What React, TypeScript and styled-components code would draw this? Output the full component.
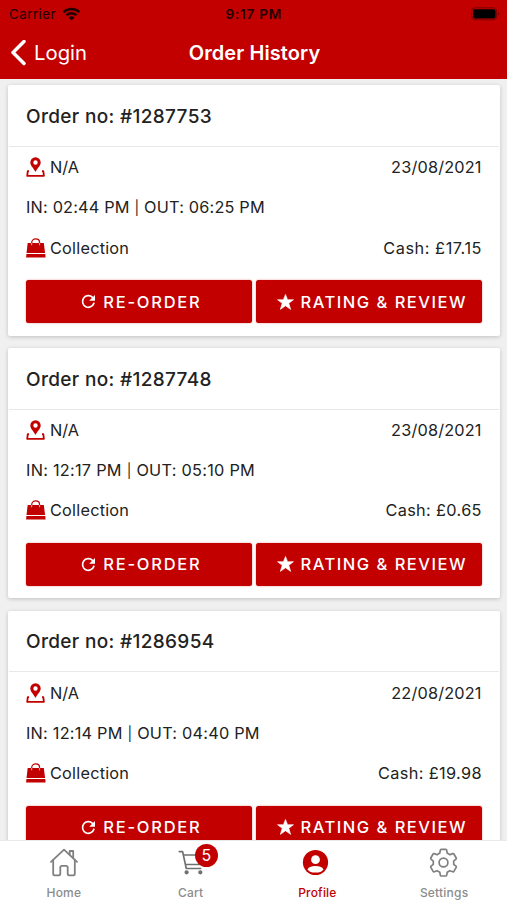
import React from 'react';
import styled, { createGlobalStyle } from 'styled-components';

const RED = '#c20000';

const GlobalStyle = createGlobalStyle`
  * { box-sizing: border-box; }
  body { margin: 0; background: #f0f0f1; font-family: Inter, "Liberation Sans", sans-serif; }
`;

const Screen = styled.div`
  width: 507px;
  height: 900px;
  display: flex;
  flex-direction: column;
  overflow: hidden;
  background: #f0f0f1;
`;

const Header = styled.header`
  flex: none;
  height: 79px;
  background: ${RED};
`;

const StatusBar = styled.div`
  height: 27px;
  display: grid;
  grid-template-columns: 1fr auto 1fr;
  align-items: center;
  padding: 0 7px 0 9px;
  color: #210000;
`;

const Carrier = styled.div`
  display: flex;
  align-items: center;
  gap: 6px;
  font-size: 13.4px;
  letter-spacing: 0.45px;
`;

const Clock = styled.div`
  width: 58px;
  font-size: 13.6px;
  font-weight: 600;
  letter-spacing: 0.75px;
  white-space: nowrap;
`;

const BatterySlot = styled.div`
  display: flex;
  justify-content: flex-end;
`;

const NavBar = styled.div`
  height: 51px;
  display: grid;
  grid-template-columns: 1fr auto 1fr;
  align-items: center;
  padding: 0 10px;
  color: #fff;
`;

const BackButton = styled.button`
  display: flex;
  align-items: center;
  gap: 7px;
  padding: 0;
  border: 0;
  background: none;
  color: inherit;
  font: 400 20.3px Inter, sans-serif;
`;

const Title = styled.h1`
  margin: 0 -1px 0 1px;
  font-size: 20px;
  font-weight: 600;
  letter-spacing: 0.1px;
`;

const OrderList = styled.main`
  flex: 1;
  min-height: 0;
  overflow: hidden;
  display: flex;
  flex-direction: column;
  gap: 12.3px;
  padding: 6.4px 7px 0 8px;
`;

const Card = styled.article`
  flex: none;
  height: 250.4px;
  border-radius: 2px;
  background: #fff;
  box-shadow: 0 1px 4px rgba(0, 0, 0, 0.2);
`;

const CardHeader = styled.h2`
  margin: 0 1px;
  height: 61.6px;
  padding: 1.6px 17px 0;
  display: flex;
  align-items: center;
  border-bottom: 1px solid #e8e8e8;
  color: #222;
  font-size: 19px;
  font-weight: 500;
`;

const CardRow = styled.div`
  height: 40.3px;
  padding: 0 18.5px 0 18px;
  display: flex;
  align-items: center;
  justify-content: space-between;
  color: #222;
  font-size: 16.3px;
`;

const IconLabel = styled.span`
  display: flex;
  align-items: center;
  gap: 4px;
`;

const Text = styled.span<{ $tracking?: number }>`
  letter-spacing: ${({ $tracking = 0 }) => $tracking}px;
  margin-right: ${({ $tracking = 0 }) => -$tracking}px;
  white-space: nowrap;
`;

const Divider = styled.span`
  font-size: 14px;
`;

const Actions = styled.div`
  display: grid;
  grid-template-columns: 1fr 1fr;
  gap: 4.5px;
  padding: 12.3px 18px 0 17.5px;
`;

const ActionButton = styled.button`
  height: 43px;
  display: flex;
  align-items: center;
  justify-content: center;
  gap: 7px;
  padding: 0 0 0 4px;
  border: 0;
  border-radius: 2.5px;
  background: ${RED};
  box-shadow: 0 0 2px rgba(194, 0, 0, 0.45);
  color: #fff;
  font: 500 16.5px Inter, sans-serif;
`;

const TabBar = styled.nav`
  flex: none;
  height: 60px;
  display: grid;
  grid-template-columns: repeat(4, 1fr);
  border-top: 1px solid #e9e9e9;
  background: #fff;
`;

const Tab = styled.a<{ $active?: boolean }>`
  display: flex;
  flex-direction: column;
  align-items: center;
  padding: 6px 0 0 1px;
  color: ${({ $active }) => ($active ? RED : '#8c8c8c')};
`;

const TabIcon = styled.span`
  position: relative;
  height: 30px;
  display: flex;
`;

const TabLabel = styled.span`
  margin-top: 8px;
  font-size: 12px;
  line-height: 15px;
  font-weight: 500;
  letter-spacing: 0.2px;
`;

const Badge = styled.span`
  position: absolute;
  left: 19px;
  top: -3.5px;
  width: 23.5px;
  height: 23.5px;
  display: flex;
  align-items: center;
  justify-content: center;
  border-radius: 50%;
  background: ${RED};
  color: #fff;
  font-size: 16px;
`;

const WifiIcon = () => (
  <svg width="19" height="14" viewBox="0 0 18 14" fill="none" stroke="#210000" strokeWidth="2.5">
    <path d="M1 5.200C5.300.8 12.700.8 17 5.200" />
    <path d="M4 8.300C6.800 5.500 11.200 5.500 14 8.300" />
    <path d="M9 13.500 5.900 10.400C7.500 8.900 10.500 8.900 12.100 10.400Z" fill="#210000" stroke="none" />
  </svg>
);

const BatteryIcon = () => (
  <svg width="29" height="14" viewBox="0 0 29 14">
    <rect x=".6" y=".8" width="25" height="12" rx="3.500" fill="none" stroke="#000" strokeOpacity=".35" />
    <rect x="2" y="2.200" width="22.500" height="9.200" rx="2" fill="#000" />
    <path d="M27 4.800q1.800 2 0 4z" fill="#000" fillOpacity=".45" />
  </svg>
);

const BackIcon = () => (
  <svg width="17" height="26" viewBox="0 0 17 26" fill="none" stroke="#fff" strokeWidth="3.500" strokeLinecap="round" strokeLinejoin="round">
    <path d="M14 1.500 3 12.500 14 23.500" />
  </svg>
);

const PinIcon = () => (
  <svg width="20" height="20" viewBox="0 0 20 20" fill={RED}>
    <path fillRule="evenodd" d="M9.500.3a5.200 5.200 0 0 0-5.200 5.200c0 3.100 3.500 5.900 4.800 9h.8c1.300-3.100 4.800-5.900 4.800-9a5.200 5.200 0 0 0-5.200-5.200zm0 3a2.200 2.200 0 1 1 0 4.400 2.200 2.200 0 0 1 0-4.400z" />
    <path d="M3 14.100H1.800L1.200 18.800H17.900L17.300 14.100H16" fill="none" stroke={RED} strokeWidth="1.800" strokeLinejoin="round" />
  </svg>
);

const BagIcon = () => (
  <svg width="20" height="20" viewBox="0 0 20 20" fill={RED}>
    <path d="M5.700 7V4.700c0-5 7.900-5 7.900 0V7" fill="none" stroke={RED} strokeWidth="1.300" />
    <path d="M1.700 4.900h16.100l1.300 10.200H.5z" />
    <path d="M.4 16h18.900l.3 3.600H.1z" />
    <path d="M5.700 4.900v2.400M13.600 4.900v2.400" stroke="#f4c7c7" strokeWidth=".9" />
  </svg>
);

const RefreshIcon = () => (
  <svg width="15" height="15" viewBox="0 0 15 15">
    <path d="M12.900 9.200A5.800 5.800 0 1 1 11.500 3.400" fill="none" stroke="#fff" strokeWidth="1.700" strokeLinecap="round" />
    <path d="M14 1v5.800H8.200z" fill="#fff" />
  </svg>
);

const StarIcon = () => (
  <svg width="17" height="16" viewBox="0 0 17 16" fill="#fff" stroke="#fff" strokeWidth=".6" strokeLinejoin="round">
    <path d="M8.500.4l2.100 5.300h5.900l-4.700 3.600 1.900 6.100-5.200-3.600-5.200 3.600 1.900-6.100L.5 5.700h5.900z" />
  </svg>
);

const HomeIcon = () => (
  <svg width="30" height="30" viewBox="0 0 30 30" fill="none" stroke="#808080" strokeWidth="1.800" strokeLinecap="round" strokeLinejoin="round">
    <path d="M2 14.800 15 2.700 28 14.800" />
    <path d="M4.200 13v13.700q0 1.600 1.600 1.600h3.900q1.600 0 1.600-1.600v-6.200q0-1.600 1.600-1.600h4.200q1.600 0 1.600 1.600v6.200q0 1.600 1.600 1.600h3.900q1.600 0 1.600-1.600V13" />
    <path d="M20.700 7.800V4h3.500v7.100" />
  </svg>
);

const CartIcon = () => (
  <svg width="30" height="30" viewBox="0 0 30 30" fill="none" stroke="#707070" strokeWidth="1.700" strokeLinecap="round" strokeLinejoin="round">
    <path d="M3.300 4.600h3.300L10.300 21.500h14.300M7.300 8h17.300L23.300 17.500H9.400" />
    <circle cx="10.600" cy="25.300" r="1.300" fill="#707070" />
    <circle cx="24.300" cy="25.300" r="1.300" fill="#707070" />
  </svg>
);

const ProfileIcon = () => (
  <svg width="30" height="30" viewBox="0 0 30 30">
    <circle cx="13.500" cy="15.500" r="12.600" fill={RED} />
    <circle cx="13.500" cy="12.700" r="4.400" fill="#fff" />
    <ellipse cx="13.500" cy="22.300" rx="7.700" ry="3.300" fill="#fff" />
  </svg>
);

const GearIcon = () => (
  <svg width="30" height="30" viewBox="0 0 30 30" fill="none" stroke="#808080" strokeWidth="1.700" strokeLinejoin="round">
    <path transform="translate(-.5 .5)" d="M12.700 1.900h4.600q.8 0 .9.800l.5 2.900 2.700 1.600 2.800-1.100q.8-.3 1.200.4l2.300 4q.4.700-.2 1.200l-2.300 1.900v3.200l2.300 1.900q.6.500.2 1.200l-2.300 4q-.4.700-1.200.4l-2.800-1.100-2.700 1.600-.5 2.900q-.1.800-.9.800h-4.600q-.8 0-.9-.8l-.5-2.900-2.700-1.600-2.800 1.100q-.8.300-1.200-.4l-2.300-4q-.4-.7.200-1.200l2.300-1.900v-3.200l-2.300-1.900q-.6-.5-.2-1.200l2.300-4q.4-.7 1.200-.4l2.800 1.100 2.700-1.600.5-2.900q.1-.8.900-.8z" />
    <circle cx="14.500" cy="15.500" r="4.400" />
  </svg>
);

interface Order {
  number: string;
  date: string;
  timeIn: string;
  timeOut: string;
  total: string;
  tracking: { number: number; time: number; total: number };
}

const orders: Order[] = [
  { number: '1287753', date: '23/08/2021', timeIn: '02:44 PM', timeOut: '06:25 PM', total: '17.15', tracking: { number: 0.34, time: 0.18, total: 0.56 } },
  { number: '1287748', date: '23/08/2021', timeIn: '12:17 PM', timeOut: '05:10 PM', total: '0.65', tracking: { number: 0.34, time: 0.26, total: 0.35 } },
  { number: '1286954', date: '22/08/2021', timeIn: '12:14 PM', timeOut: '04:40 PM', total: '19.98', tracking: { number: 0.34, time: 0.22, total: 0.37 } },
];

const OrderCard = ({ order }: { order: Order }) => (
  <Card>
    <CardHeader><Text $tracking={order.tracking.number}>Order no: #{order.number}</Text></CardHeader>
    <CardRow>
      <IconLabel><PinIcon /><Text>N/A</Text></IconLabel>
      <Text $tracking={0.18}>{order.date}</Text>
    </CardRow>
    <CardRow>
      <Text $tracking={order.tracking.time}>IN: {order.timeIn} <Divider>|</Divider> OUT: {order.timeOut}</Text>
    </CardRow>
    <CardRow>
      <IconLabel><BagIcon /><Text $tracking={0.22}>Collection</Text></IconLabel>
      <Text $tracking={order.tracking.total}>Cash: £{order.total}</Text>
    </CardRow>
    <Actions>
      <ActionButton><RefreshIcon /><Text $tracking={1.75}>RE-ORDER</Text></ActionButton>
      <ActionButton><StarIcon /><Text $tracking={1.5}>RATING &amp; REVIEW</Text></ActionButton>
    </Actions>
  </Card>
);

export default function App() {
  return (
    <>
      <GlobalStyle />
      <Screen>
        <Header>
          <StatusBar>
            <Carrier>Carrier <WifiIcon /></Carrier>
            <Clock>9:17 PM</Clock>
            <BatterySlot><BatteryIcon /></BatterySlot>
          </StatusBar>
          <NavBar>
            <BackButton><BackIcon />Login</BackButton>
            <Title>Order History</Title>
          </NavBar>
        </Header>
        <OrderList>
          {orders.map((order) => <OrderCard key={order.number} order={order} />)}
        </OrderList>
        <TabBar>
          <Tab><TabIcon><HomeIcon /></TabIcon><TabLabel>Home</TabLabel></Tab>
          <Tab><TabIcon><CartIcon /><Badge>5</Badge></TabIcon><TabLabel>Cart</TabLabel></Tab>
          <Tab $active><TabIcon><ProfileIcon /></TabIcon><TabLabel>Profile</TabLabel></Tab>
          <Tab><TabIcon><GearIcon /></TabIcon><TabLabel>Settings</TabLabel></Tab>
        </TabBar>
      </Screen>
    </>
  );
}
